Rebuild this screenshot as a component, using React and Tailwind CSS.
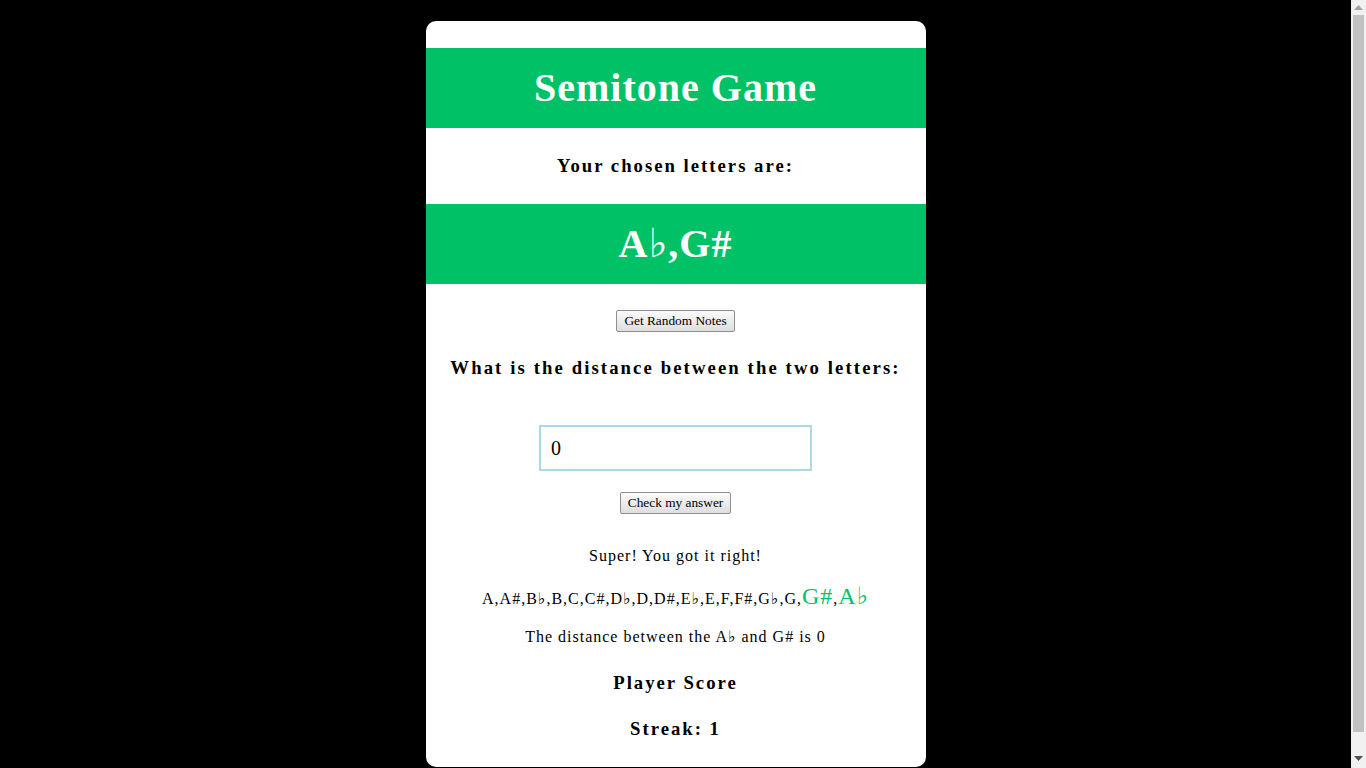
export default function App() {
  const notes = ["A", "A#", "B♭", "B", "C", "C#", "D♭", "D", "D#", "E♭", "E", "F", "F#", "G♭", "G"];
  const serif = { fontFamily: '"Liberation Serif", "DejaVu Serif", serif' };
  const btn =
    "h-[22px] rounded-[2px] border border-[#8f8f8f] bg-gradient-to-b from-[#fbfbfb] to-[#dedede] px-[7px] text-[13.33px] leading-none text-black";

  return (
    <div className="flex h-screen overflow-hidden bg-black" style={serif}>
      <div className="flex-1 py-[21px]">
        <div className="mx-auto w-[500px] rounded-[10px] bg-white pt-[27px] pb-[21px] text-center text-black">
          <div className="flex h-[80px] items-center justify-center bg-[#00c166]">
            <h1 className="text-[40px] font-bold tracking-[1px] text-white">Semitone Game</h1>
          </div>
          <div className="flex h-[76px] items-center justify-center">
            <h3 className="text-[18.72px] font-bold tracking-[2px]">Your chosen letters are:</h3>
          </div>
          <div className="flex h-[80px] items-center justify-center bg-[#00c166]">
            <h2 className="text-[40px] font-bold tracking-[1px] text-white">A♭,G#</h2>
          </div>
          <div className="flex justify-center pt-[26px]">
            <button className={btn}>Get Random Notes</button>
          </div>
          <div className="flex h-[72px] items-center justify-center">
            <h3 className="text-[18.72px] font-bold tracking-[2.1px]">What is the distance between the two letters:</h3>
          </div>
          <div className="mt-[21px] flex justify-center">
            <input
              type="text"
              defaultValue="0"
              className="h-[46px] w-[273px] border-2 border-[#add8e6] px-[10px] text-[20px] outline-none"
            />
          </div>
          <div className="mt-[21px] flex justify-center">
            <button className={btn}>Check my answer</button>
          </div>
          <div className="mt-[22px] flex h-[40px] items-center justify-center text-[16px] tracking-[1px]">
            Super! You got it right!
          </div>
          <div className="flex h-[44px] items-center justify-center pb-[4px] text-[16px] tracking-[1px]">
            <p>
              {notes.map((n) => (
                <span key={n}>{n},</span>
              ))}
              <span className="text-[24px] text-[#00c166]">G#</span>,
              <span className="text-[24px] text-[#00c166]">A♭</span>
            </p>
          </div>
          <div className="flex h-[34px] items-center justify-center text-[16px] tracking-[1px]">
            The distance between the A♭ and G# is 0
          </div>
          <div className="flex h-[58px] items-center justify-center">
            <h3 className="text-[18.72px] font-bold tracking-[2px]">Player Score</h3>
          </div>
          <div className="flex h-[34px] items-center justify-center">
            <h3 className="text-[18.72px] font-bold tracking-[2px]">Streak: 1</h3>
          </div>
        </div>
      </div>

      {/* page scrollbar */}
      <div className="flex w-[15px] shrink-0 flex-col items-center bg-[#f1f1f1]">
        <div className="flex h-[15px] items-center justify-center">
          <svg width="9" height="5" viewBox="0 0 9 5">
            <path d="M0 5 L4.5 0 L9 5 Z" fill="#a3a3a3" />
          </svg>
        </div>
        <div className="w-[11px] flex-1 bg-[#c1c1c1]" />
        <div className="mb-[2px] mt-[19px] flex h-[15px] items-center justify-center">
          <svg width="9" height="5" viewBox="0 0 9 5">
            <path d="M0 0 L9 0 L4.5 5 Z" fill="#505050" />
          </svg>
        </div>
      </div>
    </div>
  );
}
